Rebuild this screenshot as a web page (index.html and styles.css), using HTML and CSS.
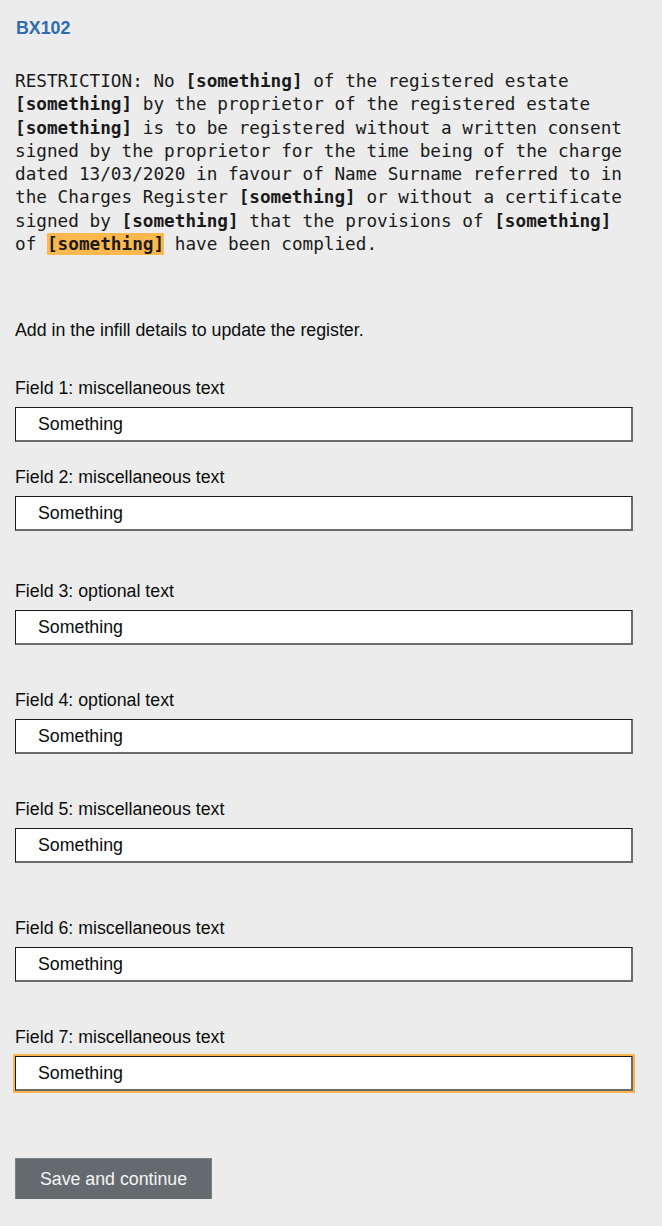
FILE: index.html
```html
<!DOCTYPE html>
<html lang="en">
<head>
<meta charset="utf-8">
<title>BX102</title>
<link rel="stylesheet" href="styles.css">
</head>
<body>
<main class="page">
  <h1 class="code">BX102</h1>
  <p class="restriction">RESTRICTION: No <b>[something]</b> of the registered estate <b>[something]</b> by the proprietor of the registered estate <b>[something]</b> is to be registered without a written consent signed by the proprietor for the time being of the charge dated 13/03/2020 in favour of Name Surname referred to in the Charges Register <b>[something]</b> or without a certificate signed by <b>[something]</b> that the provisions of <b>[something]</b> of <b class="hl">[something]</b> have been complied.</p>
  <p class="intro">Add in the infill details to update the register.</p>
  <form class="form">
    <div class="group g1">
      <label class="label" for="f1">Field 1: miscellaneous text</label>
      <input class="input" id="f1" type="text" value="Something">
    </div>
    <div class="group g2">
      <label class="label" for="f2">Field 2: miscellaneous text</label>
      <input class="input" id="f2" type="text" value="Something">
    </div>
    <div class="group g3">
      <label class="label" for="f3">Field 3: optional text</label>
      <input class="input" id="f3" type="text" value="Something">
    </div>
    <div class="group g4">
      <label class="label" for="f4">Field 4: optional text</label>
      <input class="input" id="f4" type="text" value="Something">
    </div>
    <div class="group g5">
      <label class="label" for="f5">Field 5: miscellaneous text</label>
      <input class="input" id="f5" type="text" value="Something">
    </div>
    <div class="group g6">
      <label class="label" for="f6">Field 6: miscellaneous text</label>
      <input class="input" id="f6" type="text" value="Something">
    </div>
    <div class="group g7">
      <label class="label" for="f7">Field 7: miscellaneous text</label>
      <input class="input input-focus" id="f7" type="text" value="Something">
    </div>
    <button class="button" type="button">Save and continue</button>
  </form>
</main>
</body>
</html>
```

FILE: styles.css
```css
html, body {
  margin: 0;
  padding: 0;
  background: #ececec;
}
body {
  font-family: "Liberation Sans", Arial, sans-serif;
  font-size: 17.78px;
  color: #0b0c0c;
}
.page {
  padding: 18px 0 0 15px;
  width: 618px;
}
.code {
  margin: 0 0 0 1px;
  font-size: 17.78px;
  line-height: 20px;
  font-weight: bold;
  color: #2f6cae;
}
.restriction {
  margin: 32px 0 0 0;
  font-family: "DejaVu Sans Mono", "Liberation Mono", monospace;
  font-size: 17.7px;
  line-height: 23.3px;
  color: #1a1a1a;
}
.restriction b {
  font-weight: bold;
}
.hl {
  background: #fdb84d;
  padding: 1px 0;
}
.intro {
  margin: 64px 0 0 0;
  line-height: 20px;
}
.form {
  display: flex;
  flex-direction: column;
  align-items: flex-start;
}
.group {
  display: flex;
  flex-direction: column;
  width: 618px;
}
.g1 { margin-top: 38px; }
.g2 { margin-top: 25px; }
.g3 { margin-top: 50px; }
.g4 { margin-top: 45px; }
.g5 { margin-top: 45px; }
.g6 { margin-top: 55px; }
.g7 { margin-top: 45px; }
.label {
  line-height: 20px;
  margin-bottom: 9px;
}
.input {
  box-sizing: border-box;
  width: 618px;
  height: 35px;
  margin: 0;
  padding: 0 0 0 22px;
  font-family: "Liberation Sans", Arial, sans-serif;
  font-size: 17.78px;
  color: #0b0c0c;
  background: #fff;
  border-style: solid;
  border-color: #1b1b1b #6b6b6b #6b6b6b #1b1b1b;
  border-width: 1px 2px 2px 1px;
  border-radius: 0;
  outline: none;
}
.input-focus {
  box-shadow: 0 0 0 2px #fbb54c;
}
.button {
  margin-top: 67px;
  width: 197px;
  height: 41px;
  padding: 0;
  font-family: "Liberation Sans", Arial, sans-serif;
  font-size: 17.78px;
  color: #f4f4f4;
  background: #646b6e;
  border: 1px solid #7c8285;
  border-bottom: none;
  border-radius: 0;
  box-shadow: 0 2px 0 #0b0c0c;
  cursor: pointer;
}
```
